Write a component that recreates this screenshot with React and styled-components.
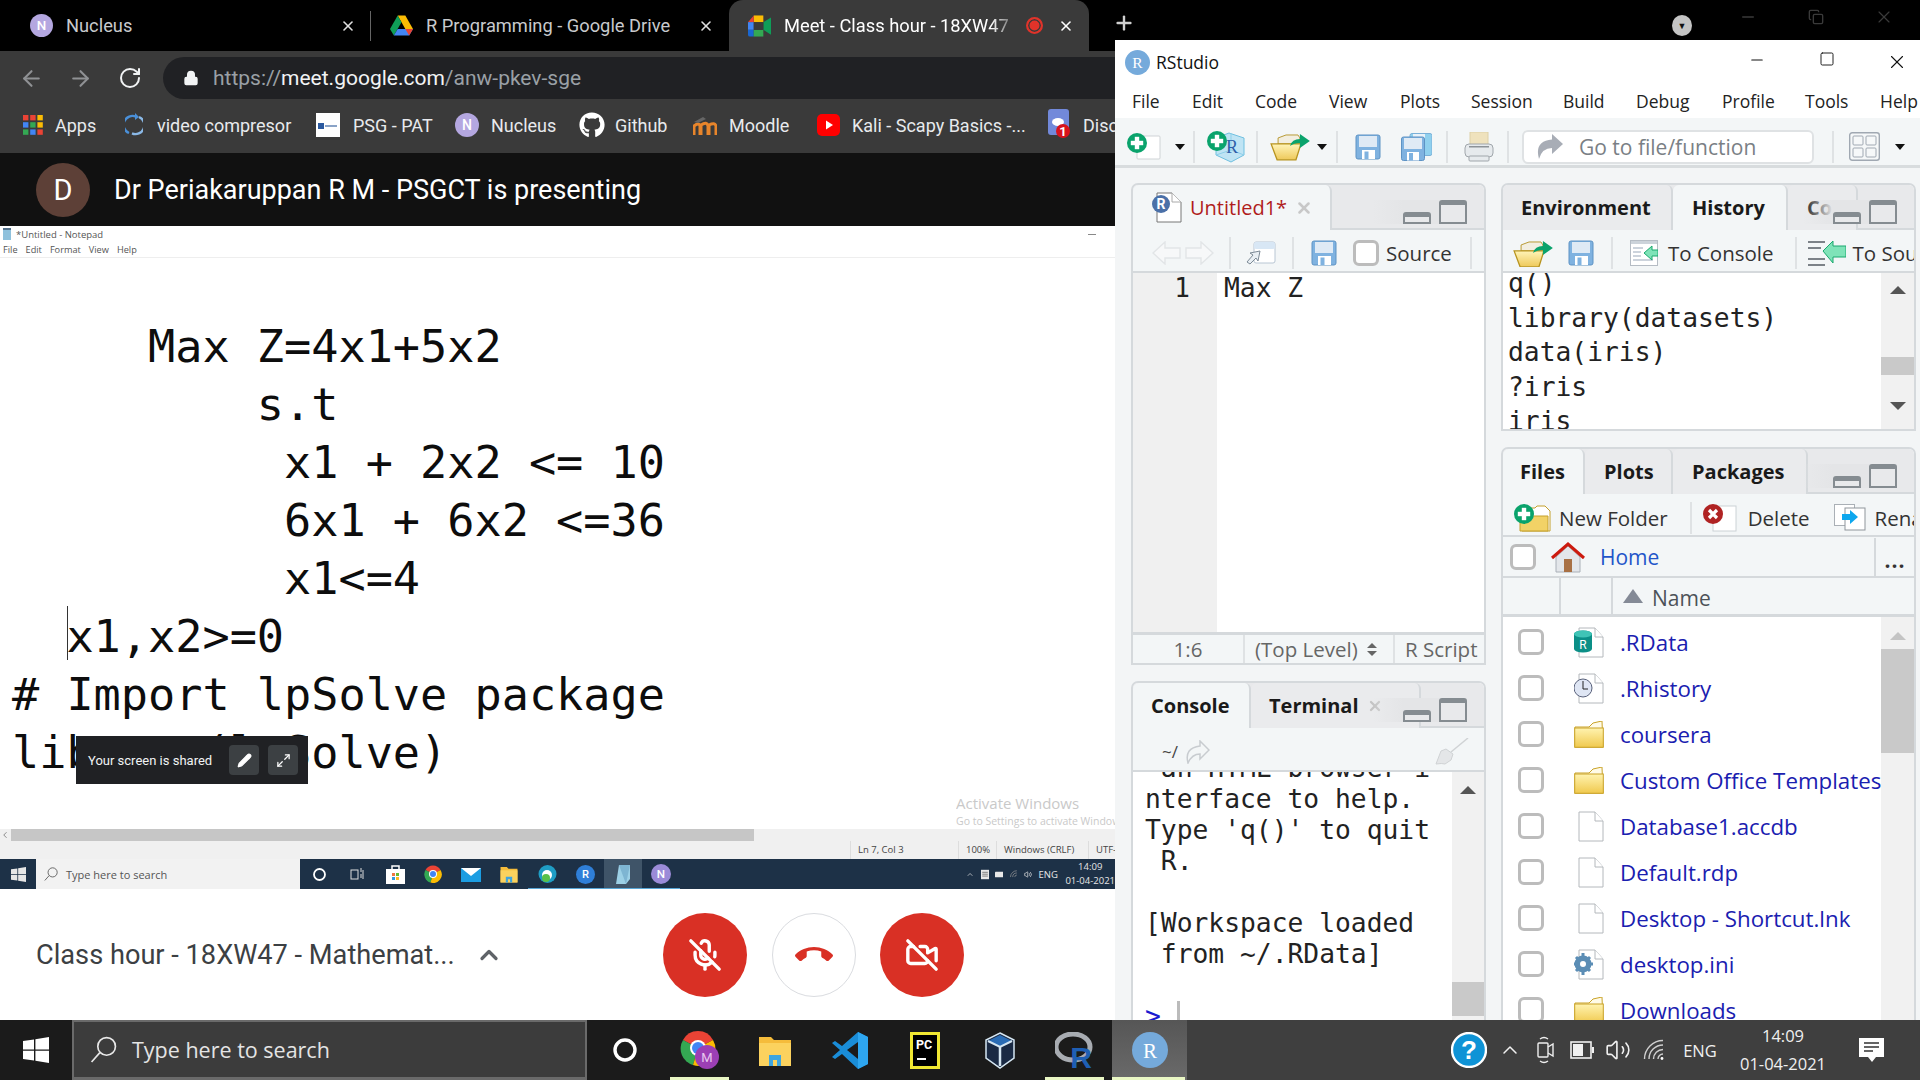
import React from 'react';
import styled, { createGlobalStyle } from 'styled-components';
import { ArrowLeft, ArrowRight, RotateCw, Lock, X, Plus, Minus, Square, Copy, ChevronUp, ChevronLeft, Pencil, Maximize2, MicOff, VideoOff, Volume2 } from 'lucide-react';
import { FaGithub } from 'react-icons/fa';

const GlobalStyle = createGlobalStyle`
  html, body { margin: 0; padding: 0; background: #000; overflow: hidden; }
  * { box-sizing: border-box; }
`;

const UI = '"Open Sans", "Noto Sans", sans-serif';
const MONO = '"DejaVu Sans Mono", "Liberation Mono", monospace';

const Screen = styled.div`
  width: 1920px;
  height: 1080px;
  display: flex;
  flex-direction: column;
  overflow: hidden;
  font-family: ${UI};
`;

const MainRow = styled.div`
  flex: none;
  height: 1020px;
  display: flex;
`;

const Spacer = styled.span`
  flex: ${p => (p.$grow ? 1 : 'none')};
  width: ${p => p.$w ?? 0}px;
`;

/* ---------- chrome ---------- */

const ChromeColumn = styled.div`
  width: 1115px;
  flex: none;
  display: flex;
  flex-direction: column;
  background: #fff;
`;

const TabStrip = styled.div`
  height: 51px;
  flex: none;
  display: flex;
  background: #000;
`;

const Tab = styled.div`
  flex: none;
  width: ${p => p.$w}px;
  padding-left: ${p => p.$pad}px;
  padding-right: 15px;
  display: flex;
  align-items: center;
  gap: 13px;
  color: ${p => (p.$active ? '#fff' : '#c8cacd')};
  background: ${p => (p.$active ? '#3a3a3a' : 'transparent')};
  border-radius: ${p => (p.$active ? '14px 14px 0 0' : '0')};
  font-family: Roboto, sans-serif;
  font-size: 18.3px;
  position: relative;
  ${p => p.$sep && `&::after { content: ''; position: absolute; right: 0; top: 11px; bottom: 10px; width: 1px; background: #666; }`}
`;

const TabTitle = styled.span`
  flex: 1;
  white-space: nowrap;
  overflow: hidden;
  min-width: 0;
  ${p => p.$fade && `-webkit-mask-image: linear-gradient(90deg, #000 88%, transparent 100%); mask-image: linear-gradient(90deg, #000 88%, transparent 100%);`}
`;

const RecDot = styled.span`
  width: 17px;
  height: 17px;
  flex: none;
  border-radius: 50%;
  background: #e0332a;
  border: 2px solid #e0332a;
  box-shadow: inset 0 0 0 1.5px #3a3a3a;
  margin-left: -6px;
  margin-right: 2px;
`;

const NavBar = styled.div`
  height: 52px;
  flex: none;
  display: flex;
  align-items: center;
  padding-top: 2px;
  background: #3a3a3a;
  color: #8f9194;
`;

const NavButton = styled.div`
  width: 49px;
  display: flex;
  justify-content: center;
  color: ${p => (p.$on ? '#f1f3f4' : '#8f9194')};
`;

const NavIcons = styled.div`
  display: flex;
  padding-left: 7px;
  width: 163px;
`;

const Address = styled.div`
  flex: 1;
  height: 42px;
  border-radius: 21px 0 0 21px;
  background: #202124;
  display: flex;
  align-items: center;
  padding-left: 20px;
  gap: 14px;
  font-family: Roboto, sans-serif;
  font-size: 21px;
  color: #9aa0a6;
`;

const AddressStrong = styled.span`
  color: #f1f3f4;
`;

const Bookmarks = styled.div`
  height: 50px;
  flex: none;
  background: #3a3a3a;
  padding: 0 0 6px 23px;
  display: flex;
  align-items: center;
  overflow: hidden;
  color: #e8eaed;
  font-family: Roboto, sans-serif;
  font-size: 18px;
  white-space: nowrap;
`;

const Bookmark = styled.div`
  flex: none;
  width: ${p => p.$w}px;
  display: flex;
  align-items: center;
  gap: ${p => p.$gap ?? 12}px;
`;

const Presenter = styled.div`
  height: 73px;
  flex: none;
  background: #111;
  display: flex;
  align-items: center;
  padding-left: 36px;
  gap: 24px;
  color: #fff;
  font-family: Roboto, sans-serif;
  font-size: 27px;
`;

const Avatar = styled.div`
  width: 54px;
  height: 54px;
  border-radius: 50%;
  background: #5d4037;
  display: flex;
  align-items: center;
  justify-content: center;
  font-size: 29px;
`;

/* ---------- shared notepad ---------- */

const Notepad = styled.div`
  flex: 1;
  display: flex;
  flex-direction: column;
  min-height: 0;
  background: #fff;
`;

const NotepadTitle = styled.div`
  height: 16px;
  flex: none;
  display: flex;
  align-items: center;
  padding: 0 8px 0 2px;
  gap: 4px;
  font-size: 9.5px;
  color: #555;
`;

const NotepadMinimize = styled.span`
  margin-left: auto;
  margin-right: 11px;
  width: 8px;
  height: 1px;
  background: #888;
`;

const NotepadMenu = styled.div`
  height: 16px;
  flex: none;
  display: flex;
  align-items: center;
  padding-left: 3px;
  gap: 8px;
  font-size: 9.2px;
  color: #555;
  border-bottom: 1px solid #eee;
`;

const NotepadText = styled.div`
  flex: 1;
  min-height: 0;
  position: relative;
  padding: 60px 0 0 12px;
  overflow: hidden;
  font-family: ${MONO};
  font-size: 45.2px;
  line-height: 58px;
  color: #0d0d0d;
  white-space: pre;
`;

const Caret = styled.span`
  position: absolute;
  left: 67px;
  top: 348px;
  width: 1px;
  height: 54px;
  background: #333;
`;

const ShareToast = styled.div`
  position: absolute;
  left: 76px;
  top: 478px;
  width: 232px;
  height: 48px;
  background: #202124;
  display: flex;
  align-items: center;
  padding: 0 10px 0 12px;
  gap: 9px;
  font-family: Roboto, sans-serif;
  font-size: 13px;
  line-height: 1;
  color: #f1f3f4;
`;

const ToastLabel = styled.span`
  flex: 1;
  white-space: nowrap;
`;

const ToastButton = styled.span`
  width: 30px;
  height: 30px;
  border-radius: 4px;
  background: #3c4043;
  display: flex;
  align-items: center;
  justify-content: center;
`;

const Watermark = styled.div`
  position: absolute;
  left: 956px;
  top: 534px;
  width: 159px;
  overflow: hidden;
  color: #c9c9c9;
  font-family: ${UI};
  font-size: 15px;
  line-height: 22px;
`;

const WatermarkSub = styled.div`
  font-size: 10.5px;
  line-height: 14px;
`;

const HScroll = styled.div`
  height: 12px;
  flex: none;
  background: #f0f0f0;
  display: flex;
  align-items: center;
  color: #777;
`;

const HScrollThumb = styled.div`
  width: 743px;
  height: 12px;
  background: #c6c6c6;
  margin-left: 1px;
`;

const NotepadStatus = styled.div`
  height: 18px;
  flex: none;
  background: #f0f0f0;
  display: flex;
  font-size: 9.5px;
  color: #444;
  padding-left: 850px;
`;

const StatusCell = styled.div`
  width: ${p => p.$w}px;
  border-left: 1px solid #ddd;
  padding-left: 7px;
  line-height: 18px;
  white-space: nowrap;
  overflow: hidden;
`;

const InnerTaskbar = styled.div`
  height: 30px;
  flex: none;
  background: #1d3147;
  display: flex;
  align-items: center;
  overflow: hidden;
  color: #e6e6e6;
`;

const InnerStart = styled.div`
  width: 36px;
  display: flex;
  justify-content: center;
`;

const InnerSearch = styled.div`
  width: 264px;
  height: 30px;
  background: #f2f2f2;
  color: #555;
  display: flex;
  align-items: center;
  padding-left: 8px;
  gap: 8px;
  font-size: 11px;
`;

const InnerSlot = styled.div`
  width: 38px;
  height: 30px;
  flex: none;
  display: flex;
  align-items: center;
  justify-content: center;
  background: ${p => (p.$active ? '#3f5468' : 'transparent')};
  box-shadow: ${p => (p.$open ? 'inset 0 -1px 0 #58a6d6' : 'none')};
`;

const InnerTray = styled.div`
  margin-left: auto;
  display: flex;
  align-items: center;
  gap: 6.5px;
  width: 155px;
  flex: none;
  font-size: 9.5px;
  padding-left: 6px;
`;

const InnerClock = styled.div`
  flex: none;
  font-size: 9.5px;
  line-height: 14px;
  text-align: center;
  white-space: nowrap;
  margin-left: 1px;
`;

/* ---------- meet bar ---------- */

const MeetBar = styled.div`
  height: 131px;
  flex: none;
  background: #fff;
  display: flex;
  align-items: center;
  padding-left: 36px;
`;

const MeetTitle = styled.div`
  width: 627px;
  display: flex;
  align-items: center;
  gap: 20px;
  font-family: Roboto, sans-serif;
  font-size: 27.2px;
  color: #3c4043;
  white-space: nowrap;
`;

const MeetButtons = styled.div`
  display: flex;
  gap: 24.5px;
`;

const RoundButton = styled.div`
  width: 84px;
  height: 84px;
  border-radius: 50%;
  background: ${p => (p.$light ? '#fff' : '#d93025')};
  border: ${p => (p.$light ? '1px solid #dadce0' : 'none')};
  display: flex;
  align-items: center;
  justify-content: center;
  color: #fff;
`;

/* ---------- rstudio ---------- */

const RightColumn = styled.div`
  flex: none;
  width: 805px;
  display: flex;
  flex-direction: column;
`;

const WindowStrip = styled.div`
  height: 40px;
  flex: none;
  background: #000;
  display: flex;
  align-items: center;
  padding: 0 2px 0 0;
  color: #d0d0d0;
`;

const StripPlus = styled.div`
  width: 20px;
  margin-top: 10px;
  margin-left: -2px;
`;

const StripMenu = styled.div`
  margin-left: auto;
  width: 20px;
  height: 21px;
  border-radius: 50%;
  background: #c4c4c4;
  display: flex;
  align-items: center;
  justify-content: center;
  margin-top: 10px;
  margin-right: 22px;
  color: #111;
  font-size: 9px;
`;

const StripControl = styled.div`
  width: 68px;
  display: flex;
  justify-content: center;
  color: #3a3a3a;
  margin-top: -6px;
`;

const RStudioWindow = styled.div`
  flex: 1;
  min-height: 0;
  display: flex;
  flex-direction: column;
  background: #fff;
  overflow: hidden;
`;

const TitleBar = styled.div`
  height: 44px;
  flex: none;
  display: flex;
  align-items: center;
  padding-left: 10px;
  gap: 6px;
  font-size: 17.5px;
  color: #111;
`;

const WindowButtons = styled.div`
  margin-left: auto;
  margin-right: -12px;
  display: flex;
  color: #111;
`;

const WindowButton = styled.div`
  width: 70px;
  display: flex;
  justify-content: center;
`;

const MenuBar = styled.div`
  height: 34px;
  flex: none;
  display: flex;
  align-items: center;
  font-size: 17.5px;
  color: #222;
  padding-left: 17px;
  white-space: nowrap;
`;

const MenuItem = styled.span`
  flex: none;
  width: ${p => p.$w}px;
`;

const Toolbar = styled.div`
  height: 50px;
  flex: none;
  background: #f3f6f7;
  border-bottom: 3px solid #d8dcde;
  display: flex;
  align-items: center;
  padding: 10px 0 0 12px;
  & svg { flex: none; }
`;

const ToolSep = styled.span`
  flex: none;
  width: 2px;
  height: ${p => p.$h ?? 32}px;
  background: #dfe2e4;
  margin-left: ${p => p.$ml ?? 13}px;
  margin-right: ${p => p.$mr ?? 13}px;
`;

const DropArrow = styled.span`
  flex: none;
  width: 0;
  height: 0;
  border-left: 5px solid transparent;
  border-right: 5px solid transparent;
  border-top: 6px solid #111;
  margin-left: ${p => p.$ml ?? 8}px;
`;

const GotoBox = styled.div`
  flex: none;
  width: 292px;
  height: 34px;
  background: #fff;
  border: 2px solid #dfe2e4;
  border-radius: 6px;
  display: flex;
  align-items: center;
  padding-left: 13px;
  gap: 16px;
  font-size: 21px;
  color: #7a7f85;
`;

const Workspace = styled.div`
  flex: 1;
  min-height: 0;
  background: #f3f5f6;
  display: flex;
  gap: 15px;
  padding: 15px 4px 0 16px;
`;

const PaneColumn = styled.div`
  flex: none;
  width: ${p => p.$w}px;
  display: flex;
  flex-direction: column;
  gap: 16px;
`;

const Pane = styled.div`
  flex: none;
  height: ${p => p.$h}px;
  display: flex;
  flex-direction: column;
  border: 2px solid #d5d9dc;
  border-radius: 7px 7px 0 0;
  background: #fff;
  overflow: hidden;
`;

const TabBar = styled.div`
  height: 45px;
  flex: none;
  display: flex;
  background: #e8e9eb;
  border-bottom: 2px solid #d5d9dc;
  position: relative;
`;

const PaneTab = styled.div`
  flex: none;
  width: ${p => p.$w}px;
  height: 45px;
  padding-left: ${p => p.$pad ?? 0}px;
  background: ${p => (p.$active ? '#f3f6f7' : '#eaebed')};
  border-right: 2px solid #d5d9dc;
  border-radius: 6px 6px 0 0;
  display: flex;
  align-items: center;
  gap: 8px;
  font-size: 20px;
  font-weight: ${p => (p.$red ? 400 : 700)};
  color: ${p => (p.$red ? '#b01c1c' : '#1a1a1a')};
  white-space: nowrap;
  overflow: hidden;
  & svg { flex: none; }
`;

const PaneControls = styled.div`
  position: absolute;
  right: 17px;
  bottom: 4px;
  display: flex;
  align-items: flex-end;
  gap: 8px;
  padding-left: 30px;
  background: linear-gradient(90deg, transparent, #e4e5e7 30px);
`;

const MinShape = styled.span`
  width: 28px;
  height: 12px;
  border: 2px solid #858c91;
  border-top-width: 5px;
  border-radius: 3px 3px 0 0;
  background: #e8e9eb;
`;

const MaxShape = styled.span`
  width: 28px;
  height: 24px;
  border: 2px solid #858c91;
  border-top-width: 5px;
  border-radius: 3px 3px 0 0;
  background: #e8e9eb;
`;

const PaneBar = styled.div`
  height: 43px;
  flex: none;
  background: #f3f6f7;
  border-bottom: 2px solid #d5d9dc;
  display: flex;
  align-items: center;
  padding-top: ${p => p.$top ?? 4}px;
  padding-left: ${p => p.$pad ?? 12}px;
  font-size: 20.5px;
  color: #333;
  white-space: nowrap;
  overflow: hidden;
  & svg { flex: none; }
`;

const BarLabel = styled.span`
  flex: none;
  margin-left: ${p => p.$ml ?? 8}px;
`;

const Checkbox = styled.span`
  flex: none;
  display: block;
  width: 26px;
  height: 26px;
  border: 3px solid #bcbcbc;
  border-radius: 6px;
  background: #fff;
`;

const EditorBody = styled.div`
  flex: 1;
  display: flex;
  min-height: 0;
`;

const Gutter = styled.div`
  width: 84px;
  flex: none;
  background: #f0f0f0;
  padding-right: 27px;
  text-align: right;
  font-family: ${MONO};
  font-size: 26px;
  line-height: 30px;
  color: #222;
`;

const Code = styled.div`
  flex: 1;
  padding-left: 7px;
  font-family: ${MONO};
  font-size: 26.3px;
  line-height: 30px;
  color: #222;
  white-space: pre;
`;

const SourceStatus = styled.div`
  height: 31px;
  flex: none;
  display: flex;
  background: #f3f6f7;
  border-top: 3px solid #d5d9dc;
  font-size: 20.5px;
  color: #666;
  line-height: 28px;
`;

const StatusPart = styled.div`
  flex: none;
  width: ${p => p.$w}px;
  padding-left: ${p => p.$pad ?? 0}px;
  border-right: ${p => (p.$last ? 'none' : '2px solid #dfe2e4')};
  display: flex;
  align-items: center;
  justify-content: ${p => (p.$center ? 'center' : 'flex-start')};
  gap: 9px;
  white-space: nowrap;
  overflow: hidden;
`;

const UpDown = styled.span`
  display: flex;
  flex-direction: column;
  gap: 3px;
`;

const ScrollBody = styled.div`
  flex: 1;
  min-height: 0;
  display: flex;
  overflow: hidden;
  background: #fff;
`;

const MonoLines = styled.div`
  flex: 1;
  min-width: 0;
  margin-top: ${p => p.$mt ?? 0}px;
  padding-left: ${p => p.$pad ?? 5}px;
  font-family: ${MONO};
  font-size: 26.3px;
  line-height: ${p => p.$lh}px;
  color: #222;
  white-space: pre;
`;

const Prompt = styled.span`
  color: #1a1ad0;
`;

const PromptCursor = styled.span`
  display: inline-block;
  width: 3px;
  height: 30px;
  margin-left: 16px;
  vertical-align: top;
  background: #bbb;
`;

const VScroll = styled.div`
  flex: none;
  width: ${p => p.$w}px;
  background: #f1f1f1;
  display: flex;
  flex-direction: column;
  align-items: center;
`;

const ScrollArrow = styled.span`
  flex: none;
  width: 0;
  height: 0;
  border-left: ${p => p.$s ?? 8}px solid transparent;
  border-right: ${p => p.$s ?? 8}px solid transparent;
  ${p => (p.$down ? `border-top: ${p.$s ?? 8}px solid ${p.$c ?? '#555'};` : `border-bottom: ${p.$s ?? 8}px solid ${p.$c ?? '#555'};`)}
  margin-top: ${p => p.$mt ?? 0}px;
`;

const ScrollThumb = styled.span`
  flex: none;
  width: 100%;
  height: ${p => p.$h}px;
  background: #c9c9c9;
  margin-top: ${p => p.$mt}px;
`;

const PathLabel = styled.span`
  font-size: 17px;
  color: #444;
  margin: 0 8px 0 29px;
`;

const PathRow = styled.div`
  height: ${p => p.$h ?? 41}px;
  flex: none;
  display: flex;
  align-items: center;
  border-bottom: 2px solid #d5d9dc;
  background: #f3f6f7;
  font-size: 21px;
  padding-top: ${p => p.$top ?? 0}px;
`;

const HomeLink = styled.span`
  color: #1f55c9;
  margin-left: 15px;
  flex: 1;
`;

const MoreCell = styled.span`
  flex: none;
  width: 40px;
  height: 39px;
  border-left: 2px solid #d5d9dc;
  text-align: center;
  line-height: 44px;
  font-weight: 700;
  color: #333;
  letter-spacing: 1px;
`;

const HeaderRow = styled.div`
  height: 39px;
  flex: none;
  display: flex;
  align-items: stretch;
  background: #f3f6f7;
  border-bottom: 3px solid #d5d9dc;
  font-size: 21px;
  color: #4c5258;
`;

const HeaderCell = styled.div`
  flex: ${p => (p.$grow ? 1 : 'none')};
  width: ${p => p.$w}px;
  border-right: ${p => (p.$grow ? 'none' : '2px solid #d5d9dc')};
  display: flex;
  align-items: center;
  padding-left: ${p => p.$pad ?? 0}px;
  padding-top: 4px;
  gap: 9px;
`;

const SortUp = styled.span`
  width: 0;
  height: 0;
  border-left: 10px solid transparent;
  border-right: 10px solid transparent;
  border-bottom: 14px solid #848a96;
  margin-top: -4px;
`;

const FileList = styled.div`
  flex: 1;
  min-width: 0;
  padding-top: 2px;
  overflow: hidden;
`;

const FileRow = styled.div`
  height: 46px;
  display: flex;
  align-items: center;
  padding-left: 15px;
`;

const FileIconCell = styled.span`
  flex: none;
  width: 30px;
  margin-left: 30px;
  margin-right: 16px;
  display: flex;
`;

const FileName = styled.span`
  font-size: 22.3px;
  color: #1a20b0;
  white-space: nowrap;
`;

/* ---------- os taskbar ---------- */

const Taskbar = styled.div`
  height: 60px;
  flex: none;
  display: flex;
  align-items: center;
  background: linear-gradient(90deg, #1b1b1b 1115px, #3f3f3f 1115px);
  color: #fff;
`;

const StartTile = styled.div`
  width: 72px;
  display: flex;
  justify-content: center;
`;

const SearchBox = styled.div`
  width: 515px;
  height: 60px;
  background: #3c3c3c;
  border: 2px solid #6a6a6a;
  border-bottom-width: 3px;
  display: flex;
  align-items: center;
  padding-left: 16px;
  gap: 15px;
  font-size: 21.5px;
  color: #e4e4e4;
`;

const TaskSlot = styled.div`
  width: 75px;
  height: 60px;
  flex: none;
  position: relative;
  display: flex;
  align-items: center;
  justify-content: center;
  background: ${p => (p.$active ? 'linear-gradient(180deg,#565656,#6a6a6a)' : 'transparent')};
  ${p => p.$open && `&::after { content: ''; position: absolute; left: 8px; right: 8px; bottom: 0; height: 3px; background: #e9f7c4; }`}
  ${p => p.$active && `&::after { left: 0; right: 2px; }`}
`;

const Tray = styled.div`
  display: flex;
  align-items: center;
  padding-left: 264px;
  color: #f0f0f0;
`;

const TrayIcon = styled.div`
  width: 36px;
  margin-right: ${p => p.$mr ?? 0}px;
  display: flex;
  justify-content: center;
`;

const TrayText = styled.div`
  width: 52px;
  margin-left: 2px;
  text-align: center;
  font-size: 16.5px;
`;

const Clock = styled.div`
  width: 110px;
  margin-left: 2px;
  text-align: center;
  font-size: 16.5px;
  line-height: 28px;
  white-space: nowrap;
`;

const Notify = styled.div`
  width: 40px;
  margin-left: 13px;
  display: flex;
  justify-content: center;
`;

/* ---------- icons ---------- */

const Letter = ({ size, bg, color = '#fff', text, font = 'Roboto, sans-serif', fs }) => (
  <svg width={size} height={size} viewBox="0 0 24 24">
    <circle cx="12" cy="12" r="12" fill={bg} />
    <text x="12" y="17" textAnchor="middle" fontFamily={font} fontSize={fs ?? 14} fontWeight="500" fill={color}>{text}</text>
  </svg>
);

const DriveIcon = () => (
  <svg width="23" height="22" viewBox="0 0 24 22">
    <polygon points="8,0 16,0 24,14 16,14" fill="#fbbc04" />
    <polygon points="8,0 0,14 4,21 12,7" fill="#0f9d58" />
    <polygon points="4,21 20,21 24,14 8,14" fill="#4285f4" />
    <polygon points="16,14 20,21 24,14" fill="#ea4335" />
  </svg>
);

const MeetIcon = () => (
  <svg width="23" height="22" viewBox="0 0 24 22">
    <polygon points="6,0 16,0 16,7 6,7" fill="#fbbc04" />
    <polygon points="6,0 6,7 0,7" fill="#ea4335" />
    <rect x="0" y="7" width="6" height="8" fill="#4285f4" />
    <path d="M0 15h6v7H2a2 2 0 0 1-2-2z" fill="#1967d2" />
    <rect x="6" y="15" width="10" height="7" fill="#34a853" />
    <polygon points="16,7 16,15 24,20 24,2" fill="#0f9d58" />
    <rect x="6" y="7" width="10" height="8" fill="#3a3a3a" />
  </svg>
);

const AppsIcon = () => {
  const colors = ['#ea4335', '#ea4335', '#fbbc04', '#4285f4', '#34a853', '#fbbc04', '#34a853', '#4285f4', '#ea4335'];
  return (
    <svg width="20" height="20" viewBox="0 0 20 20">
      {colors.map((c, i) => (
        <rect key={i} x={(i % 3) * 7.2} y={Math.floor(i / 3) * 7.2} width="5.4" height="5.4" fill={c} />
      ))}
    </svg>
  );
};

const SyncIcon = () => (
  <svg width="18" height="24" viewBox="0 0 18 24" fill="none" stroke="#4a90d9" strokeWidth="2.4">
    <path d="M4 20A8.5 8.5 0 0 1 11 3.6" />
    <path d="M14 4A8.5 8.5 0 0 1 7 20.4" stroke="#8ab8e6" />
    <polygon points="10,0 14,4 10,7" fill="#4a90d9" stroke="none" />
  </svg>
);

const PatIcon = () => (
  <svg width="24" height="24" viewBox="0 0 24 24">
    <rect width="24" height="24" fill="#fff" />
    <rect x="2" y="10" width="6" height="6" fill="#2c5aa0" />
    <rect x="9" y="12" width="12" height="2" fill="#8aa3c7" />
  </svg>
);

const MoodleIcon = () => (
  <svg width="24" height="22" viewBox="0 0 24 22">
    <path d="M1 21V12q5-4 6 0v9M8 21V11q6-4 7 1v9M16 21V11q6-3 7 1v9" fill="none" stroke="#e8852b" strokeWidth="3" />
    <path d="M1 8l9-5 3 2-8 4z" fill="#666" />
  </svg>
);

const YoutubeIcon = () => (
  <svg width="23" height="22" viewBox="0 0 23 22">
    <rect width="23" height="22" rx="5" fill="#f00" />
    <polygon points="9,6.5 16,11 9,15.5" fill="#fff" />
  </svg>
);

const DiscordIcon = () => (
  <svg width="22" height="32" viewBox="0 0 22 32">
    <rect y="0" width="21" height="26" rx="3" fill="#7289da" />
    <ellipse cx="10" cy="13" rx="6" ry="4" fill="#fff" />
    <circle cx="15" cy="22" r="7" fill="#d8121c" />
    <text x="15" y="27" textAnchor="middle" fontFamily="Roboto, sans-serif" fontSize="13" fontWeight="700" fill="#fff">1</text>
  </svg>
);

const NotepadGlyph = ({ size = 10 }) => (
  <svg width={size} height={size + 2} viewBox="0 0 10 12">
    <path d="M1 2h8v10H1z" fill="#8fc1dc" />
    <rect x="1" y="0" width="8" height="2" fill="#52708a" />
  </svg>
);

const Magnifier = ({ size, color = 'currentColor', sw = 1.6 }) => (
  <svg width={size} height={size} viewBox="0 0 26 26" fill="none" stroke={color} strokeWidth={sw}>
    <circle cx="16" cy="10" r="8.5" />
    <path d="M9.5 16L1.5 25" />
  </svg>
);

const GreenPlus = ({ x = 0, y = 0, r = 10 }) => (
  <g transform={`translate(${x} ${y})`}>
    <circle cx={r} cy={r} r={r} fill="#0aa36c" />
    <rect x={r - r * 0.62} y={r - r * 0.22} width={r * 1.24} height={r * 0.44} fill="#fff" />
    <rect x={r - r * 0.22} y={r - r * 0.62} width={r * 0.44} height={r * 1.24} fill="#fff" />
  </g>
);

const NewFileIcon = () => (
  <svg width="34" height="27" viewBox="0 0 34 27">
    <rect x="10" y="3" width="23" height="23" rx="1" fill="#fff" stroke="#cfd3d6" />
    <GreenPlus r="10" />
  </svg>
);

const ProjectIcon = () => (
  <svg width="38" height="32" viewBox="0 0 38 32">
    <path d="M9 7l13-5 15 5v17l-13 7-15-7z" fill="#bfe4f4" stroke="#6fc0e0" />
    <path d="M9 24l15-5 13 5M24 19V2" fill="none" stroke="#8fd0ea" />
    <text x="25" y="22" textAnchor="middle" fontFamily="Liberation Serif, serif" fontSize="18" fill="#2f5fa8">R</text>
    <GreenPlus r="10" />
  </svg>
);

const OpenFolder = ({ w = 40 }) => (
  <svg width={w} height={w * 0.72} viewBox="0 0 40 29">
    <defs>
      <linearGradient id="folderFill" x1="0" y1="0" x2="0" y2="1">
        <stop offset="0" stopColor="#fff4b8" />
        <stop offset="1" stopColor="#eec95a" />
      </linearGradient>
    </defs>
    <path d="M8 6l8-3h12l2 3v6H8z" fill="#f2eee0" stroke="#b89a35" />
    <path d="M1 12h26l4 0-5 16H7z" fill="url(#folderFill)" stroke="#b8941f" strokeWidth="1.3" />
    <path d="M20 14q2-7 10-7V2l10 7-10 7v-5q-6 0-10 3z" fill="#0aa36c" />
  </svg>
);

const Floppy = ({ size = 26 }) => (
  <svg width={size} height={size} viewBox="0 0 26 26">
    <rect x="1" y="1" width="24" height="24" rx="2" fill="#7fb2e0" stroke="#5e93c4" />
    <rect x="4" y="2" width="18" height="11" fill="#dfeaf5" />
    <rect x="7" y="16" width="13" height="9" fill="#fff" />
    <rect x="9.5" y="17.5" width="4" height="7.5" fill="#7fb2e0" />
  </svg>
);

const FloppyAll = () => (
  <svg width="31" height="28" viewBox="0 0 31 28">
    <rect x="9" y="0.5" width="22" height="22" rx="2" fill="#8fd0ee" stroke="#7ab0d8" />
    <rect x="12" y="1" width="12" height="16" fill="#e9f2f9" />
    <rect x="0.5" y="4" width="23" height="23.5" rx="2" fill="#7fb2e0" stroke="#5e93c4" />
    <rect x="3" y="5" width="18" height="11" fill="#dfeaf5" />
    <rect x="6" y="19" width="12" height="8.5" fill="#fff" />
    <rect x="8" y="20" width="4" height="7.5" fill="#7fb2e0" />
  </svg>
);

const PrinterIcon = () => (
  <svg width="30" height="30" viewBox="0 0 30 30">
    <rect x="6" y="0" width="18" height="15" fill="#efe2bd" stroke="#ddd0a8" />
    <rect x="1" y="12" width="28" height="13" rx="4" fill="#e6eaed" stroke="#a0a6ab" />
    <rect x="5" y="14" width="20" height="1.5" fill="#8c9297" />
    <rect x="5" y="24" width="20" height="5" rx="1" fill="#e6eaed" stroke="#a0a6ab" />
  </svg>
);

const GoToArrow = () => (
  <svg width="26" height="25" viewBox="0 0 26 25">
    <path d="M15 0l11 10-11 10v-6Q5 14 2 25-3 7 15 5.5z" fill="#a8adb6" />
  </svg>
);

const GridIcon = () => (
  <svg width="31" height="29" viewBox="0 0 31 29" fill="none" stroke="#a0a8b2">
    <rect x="0.7" y="0.7" width="29.6" height="27.6" rx="2.5" fill="#f6f8f9" strokeWidth="1.4" />
    <rect x="4" y="4" width="10" height="9" rx="1" />
    <rect x="17" y="4" width="10" height="9" rx="1" />
    <rect x="4" y="16" width="10" height="9" rx="1" />
    <rect x="17" y="16" width="10" height="9" rx="1" />
  </svg>
);

const RDocIcon = () => (
  <svg width="30" height="31" viewBox="0 0 30 31">
    <path d="M5 1h15l9 9v20H5z" fill="#fff" stroke="#777" strokeWidth="1" />
    <path d="M20 1v9h9" fill="#fff" stroke="#aaa" strokeWidth="1" />
    <circle cx="9" cy="12" r="9" fill="#4a70a8" />
    <text x="9" y="17" textAnchor="middle" fontFamily="Roboto, sans-serif" fontWeight="700" fontSize="14" fill="#fff">R</text>
  </svg>
);

const GhostArrows = () => (
  <svg width="62" height="24" viewBox="0 0 62 24" fill="#f7f8f9" stroke="#e2e5e7" strokeWidth="1.4">
    <path d="M1 12L13 1v6h15v10H13v6z" />
    <path d="M61 12L49 1v6H34v10h15v6z" />
  </svg>
);

const PopoutIcon = () => (
  <svg width="30" height="24" viewBox="0 0 30 24">
    <rect x="8" y="1" width="21" height="21" rx="2" fill="#fff" stroke="#b9c6d4" />
    <rect x="8" y="1" width="21" height="7" rx="2" fill="#d8e7f5" />
    <path d="M1 21l6-7-3-2 10-2-2 10-2-3-6 6z" fill="#e8eef3" stroke="#7d8a96" />
  </svg>
);

const ToConsoleIcon = () => (
  <svg width="28" height="26" viewBox="0 0 28 26">
    <rect x="0.5" y="0.5" width="27" height="25" fill="#fff" stroke="#b5bcc4" />
    <rect x="1" y="1" width="26" height="3" fill="#ccd3da" />
    <path d="M3 8h10M3 12h8M3 16h8M3 20h20" stroke="#ccd3dc" strokeWidth="2" />
    <path d="M14 13l8-7v4h6v6h-6v4z" fill="#7fe3b8" stroke="#1aa86e" />
  </svg>
);

const ToSourceIcon = () => (
  <svg width="38" height="26" viewBox="0 0 38 26">
    <path d="M0 2h17M0 8h13M0 19h17M0 25h17" stroke="#7c8288" strokeWidth="2.2" />
    <path d="M15 11L25 1v5h13v11H25v6z" fill="#7fe3b8" stroke="#1aa86e" />
  </svg>
);

const BackCurve = () => (
  <svg width="24" height="24" viewBox="0 0 24 24" fill="#f3f6f7" stroke="#c8ccd0" strokeWidth="1.5">
    <path d="M14 1l9 9-9 9v-5Q6 14 2 23-2 8 14 6z" />
  </svg>
);

const BroomIcon = () => (
  <svg width="34" height="28" viewBox="0 0 34 28" fill="none">
    <path d="M16 14L33 0" stroke="#d0d3d5" strokeWidth="1.5" />
    <path d="M1 26l5-13 5-2 7 5-2 6-6 4q-3-1-9 0z" fill="#e4e6e8" stroke="#cfd2d4" />
  </svg>
);

const NewFolderIcon = () => (
  <svg width="37" height="28" viewBox="0 0 37 28">
    <path d="M8 27V4h13l2-2h8l5 5v20z" fill="#fff" stroke="#c4a02c" />
    <path d="M6 27V12h28v15z" fill="#f2d266" stroke="#c4a02c" />
    <GreenPlus r="10" />
  </svg>
);

const DeleteIcon = () => (
  <svg width="34" height="28" viewBox="0 0 34 28">
    <rect x="10" y="2" width="23" height="25" fill="#fff" stroke="#ccd2d6" />
    <circle cx="10" cy="10" r="10" fill="#b02323" />
    <path d="M6 6l8 8M14 6l-8 8" stroke="#fff" strokeWidth="3.2" />
  </svg>
);

const RenameIcon = () => (
  <svg width="32" height="27" viewBox="0 0 32 27">
    <rect x="0.5" y="0.5" width="20" height="21" fill="#fff" stroke="#aab0b6" />
    <rect x="11" y="4" width="20" height="22" fill="#fff" stroke="#8f959b" />
    <path d="M8 10h8V6l8 7-8 7v-4H8z" fill="#0ea7ee" />
  </svg>
);

const HomeIcon = () => (
  <svg width="34" height="31" viewBox="0 0 34 31">
    <path d="M5 15L17 4l12 11v15H5z" fill="#e3e6ea" stroke="#aab0b8" />
    <path d="M1 16L17 2l16 14" fill="none" stroke="#cc1a0e" strokeWidth="3" />
    <rect x="13" y="17" width="8" height="13" fill="#a87044" />
  </svg>
);

const FileGlyph = ({ kind }) => {
  if (kind === 'folder') {
    return (
      <svg width="30" height="27" viewBox="0 0 30 27">
        <defs>
          <linearGradient id="rowFolder" x1="0" y1="0" x2="0" y2="1">
            <stop offset="0" stopColor="#fff3b0" />
            <stop offset="1" stopColor="#f0c94e" />
          </linearGradient>
        </defs>
        <path d="M1 26V6h14l4-4 9-2 1 26z" fill="#fffbe8" stroke="#c9a227" />
        <rect x="0.7" y="7" width="28.6" height="19.3" fill="url(#rowFolder)" stroke="#c9a227" />
      </svg>
    );
  }
  return (
    <svg width="30" height="31" viewBox="0 0 30 31">
      <path d="M5 1h16l8 9v20H5z" fill="#fff" stroke="#b4b8bc" />
      <path d="M21 1v9h8" fill="#fff" stroke="#b4b8bc" />
      {kind === 'rdata' && (
        <g>
          <path d="M0 7a9 3.5 0 0 1 18 0v15a9 3.5 0 0 1-18 0z" fill="#0b8f87" />
          <ellipse cx="9" cy="7" rx="9" ry="3.5" fill="#3fc4b6" />
          <text x="9" y="22" textAnchor="middle" fontFamily="Roboto, sans-serif" fontSize="12" fill="#fff">R</text>
        </g>
      )}
      {kind === 'clock' && (
        <g>
          <circle cx="9" cy="15" r="9" fill="#dfe6f4" stroke="#58607a" />
          <path d="M9 8v8h5" fill="none" stroke="#222" strokeWidth="1" />
        </g>
      )}
      {kind === 'gear' && (
        <g>
          <circle cx="9" cy="15" r="6" fill="none" stroke="#5b8db5" strokeWidth="5" />
          <path d="M9 4v22M-1 15h20M2 8l14 14M16 8L2 22" stroke="#5b8db5" strokeWidth="3" />
          <circle cx="9" cy="15" r="3" fill="#fff" />
        </g>
      )}
    </svg>
  );
};

const WindowsLogo = ({ size = 26 }) => (
  <svg width={size} height={size} viewBox="0 0 26 26" fill="currentColor">
    <polygon points="0,4 11,2.4 11,12.4 0,12.4" />
    <polygon points="12.4,2.2 26,0 26,12.4 12.4,12.4" />
    <polygon points="0,13.8 11,13.8 11,23.6 0,22" />
    <polygon points="12.4,13.8 26,13.8 26,26 12.4,23.8" />
  </svg>
);

const ChromeLogo = ({ size = 36 }) => (
  <svg width={size} height={size} viewBox="0 0 36 36">
    <path d="M18 18L3 10a17 17 0 0 1 30 0z" fill="#ea4335" />
    <path d="M18 18L3 10a17 17 0 0 0 10 25z" fill="#34a853" />
    <path d="M18 18l15-8a17 17 0 0 1-20 25z" fill="#fbbc04" />
    <circle cx="18" cy="18" r="8" fill="#fff" />
    <circle cx="18" cy="18" r="6" fill="#4285f4" />
  </svg>
);

const TaskChrome = () => (
  <svg width="40" height="40" viewBox="0 0 40 40">
    <path d="M18 18L3 10a17 17 0 0 1 30 0z" fill="#ea4335" />
    <path d="M18 18L3 10a17 17 0 0 0 10 25z" fill="#34a853" />
    <path d="M18 18l15-8a17 17 0 0 1-20 25z" fill="#fbbc04" />
    <circle cx="18" cy="18" r="8" fill="#fff" />
    <circle cx="18" cy="18" r="6" fill="#4285f4" />
    <circle cx="27" cy="27" r="12" fill="#9c3fb4" />
    <text x="27" y="32" textAnchor="middle" fontFamily="Roboto, sans-serif" fontSize="13" fill="#e8c8ef">M</text>
  </svg>
);

const ExplorerIcon = ({ size = 34 }) => (
  <svg width={size} height={size} viewBox="0 0 34 34">
    <path d="M1 4h12l3 3h17v26H1z" fill="#f5bc3b" />
    <rect x="1" y="10" width="32" height="23" fill="#fbd25e" />
    <path d="M11 33V22h12v11h-4v-6h-4v6z" fill="#3da5e0" />
  </svg>
);

const VSCodeIcon = () => (
  <svg width="36" height="37" viewBox="0 0 36 37">
    <path d="M26 0l10 5v27l-10 5L10 22l-7 5-3-2 8-7-8-7 3-2 7 5z" fill="#1a8dd8" />
    <path d="M26 0l10 5v27l-10 5z" fill="#2ea6f0" />
    <path d="M26 10l-11 8 11 9z" fill="#1b1b1b" />
  </svg>
);

const PyCharmIcon = () => (
  <svg width="30" height="37" viewBox="0 0 30 37">
    <rect width="30" height="37" fill="#f0e732" />
    <rect x="3" y="3" width="24" height="31" fill="#000" />
    <rect x="7" y="26" width="9" height="2" fill="#fff" />
    <text x="14" y="17" textAnchor="middle" fontFamily="Roboto, sans-serif" fontSize="12.5" fontWeight="700" fill="#fff">PC</text>
  </svg>
);

const VBoxIcon = () => (
  <svg width="32" height="37" viewBox="0 0 32 37">
    <path d="M16 1L30 8v18L16 36 2 26V8z" fill="#1a2a44" stroke="#d5e6f2" strokeWidth="1.5" />
    <path d="M4 9l12 6 12-6-12-6z" fill="#2a6cb5" />
    <path d="M16 15v19" stroke="#d5e6f2" strokeWidth="2.5" />
    <path d="M4 9l12 6 12-6" fill="none" stroke="#d5e6f2" strokeWidth="2" />
  </svg>
);

const RLogoTask = () => (
  <svg width="40" height="37" viewBox="0 0 40 37">
    <ellipse cx="18" cy="15" rx="17" ry="13" fill="none" stroke="#a8acb2" strokeWidth="5" />
    <text x="26" y="36" textAnchor="middle" fontFamily="Liberation Sans, sans-serif" fontWeight="700" fontSize="30" fill="#1f5fb4">R</text>
  </svg>
);

const HangUp = () => (
  <svg width="38" height="38" viewBox="0 0 24 24" fill="#d93025">
    <path d="M12 9c-1.6 0-3.15.25-4.6.72v3.1c0 .39-.23.74-.56.9-.98.49-1.87 1.12-2.66 1.85-.18.18-.43.28-.7.28-.28 0-.53-.11-.71-.29L.29 13.08c-.18-.17-.29-.42-.29-.7 0-.28.11-.53.29-.71C3.34 8.78 7.46 7 12 7s8.66 1.78 11.71 4.67c.18.18.29.43.29.71 0 .28-.11.53-.29.71l-2.48 2.48c-.18.18-.43.29-.71.29-.27 0-.52-.11-.7-.28-.79-.74-1.69-1.36-2.67-1.85-.33-.16-.56-.5-.56-.9v-3.1C15.15 9.25 13.6 9 12 9z" />
  </svg>
);

const HelpBadge = () => (
  <svg width="36" height="36" viewBox="0 0 36 36">
    <circle cx="18" cy="18" r="17" fill="#0e93d6" stroke="#fff" strokeWidth="2.4" />
    <text x="18" y="27" textAnchor="middle" fontFamily="Liberation Sans, sans-serif" fontSize="26" fontWeight="700" fill="#fff">?</text>
  </svg>
);

const MeetTray = () => (
  <svg width="18" height="32" viewBox="0 0 18 32" fill="none" stroke="#f0f0f0" strokeWidth="1.4">
    <rect x="1" y="9" width="10" height="14" rx="1" />
    <path d="M11 13l5-3v12l-5-3" />
    <path d="M3 5q4-3 8 0M3 27q4 3 8 0" />
  </svg>
);

const BatteryTray = () => (
  <svg width="24" height="18" viewBox="0 0 24 18">
    <rect x="1" y="1" width="20" height="16" fill="none" stroke="#f0f0f0" strokeWidth="1.6" />
    <rect x="3" y="3" width="10" height="12" fill="#f0f0f0" />
    <rect x="22" y="6" width="2" height="6" fill="#f0f0f0" />
  </svg>
);

const WifiTray = () => (
  <svg width="22" height="22" viewBox="0 0 22 22" fill="none" stroke="#cfcfcf" strokeWidth="1.4">
    <path d="M1.5 20A18.5 18.5 0 0 1 20 1.5" />
    <path d="M6 20A14 14 0 0 1 20 6" />
    <path d="M10.5 20A9.5 9.5 0 0 1 20 10.5" />
    <path d="M15 20A5 5 0 0 1 20 15" />
    <circle cx="19" cy="19.5" r="1.4" fill="#fff" stroke="none" />
  </svg>
);

const NotifyIcon = () => (
  <svg width="25" height="24" viewBox="0 0 25 24">
    <path d="M0 0h25v19h-8l-4 5-4-5H0z" fill="#fff" />
    <path d="M5 5h15M5 9h15M5 13h9" stroke="#333" strokeWidth="1.5" />
  </svg>
);

/* ---------- data ---------- */

const menus = [['File', 60], ['Edit', 63], ['Code', 74], ['View', 71], ['Plots', 71], ['Session', 92], ['Build', 73], ['Debug', 86], ['Profile', 83], ['Tools', 75], ['Help', 40]];

const files = [
  ['rdata', '.RData'],
  ['clock', '.Rhistory'],
  ['folder', 'coursera'],
  ['folder', 'Custom Office Templates'],
  ['doc', 'Database1.accdb'],
  ['doc', 'Default.rdp'],
  ['doc', 'Desktop - Shortcut.lnk'],
  ['gear', 'desktop.ini'],
  ['folder', 'Downloads'],
];

const noteText = `     Max Z=4x1+5x2
         s.t
          x1 + 2x2 <= 10
          6x1 + 6x2 <=36
          x1<=4
  x1,x2>=0
# Import lpSolve package
library(lpSolve)`;

const PaneButtons = () => (
  <PaneControls>
    <MinShape />
    <MaxShape />
  </PaneControls>
);

export default function App() {
  return (
    <Screen>
      <GlobalStyle />
      <MainRow>
        <ChromeColumn>
          <TabStrip>
            <Tab $w={371} $pad={30} $sep>
              <Letter size={23} bg="#b4a7e0" text="N" />
              <TabTitle>Nucleus</TabTitle>
              <X size={16} color="#e0e0e0" strokeWidth={2.4} />
            </Tab>
            <Tab $w={358} $pad={19}>
              <DriveIcon />
              <TabTitle>R Programming - Google Drive</TabTitle>
              <X size={16} color="#e0e0e0" strokeWidth={2.4} />
            </Tab>
            <Tab $w={360} $pad={19} $active>
              <MeetIcon />
              <TabTitle $fade>Meet - Class hour - 18XW47</TabTitle>
              <RecDot />
              <X size={16} color="#fff" strokeWidth={2.4} />
            </Tab>
          </TabStrip>
          <NavBar>
            <NavIcons>
              <NavButton><ArrowLeft size={25} /></NavButton>
              <NavButton><ArrowRight size={25} /></NavButton>
              <NavButton $on><RotateCw size={24} /></NavButton>
            </NavIcons>
            <Address>
              <Lock size={16} color="#f1f3f4" fill="#f1f3f4" />
              <span>https://<AddressStrong>meet.google.com</AddressStrong>/anw-pkev-sge</span>
            </Address>
          </NavBar>
          <Bookmarks>
            <Bookmark $w={102}><AppsIcon /><span>Apps</span></Bookmark>
            <Bookmark $w={191} $gap={14}><SyncIcon /><span>video compresor</span></Bookmark>
            <Bookmark $w={139} $gap={13}><PatIcon /><span>PSG - PAT</span></Bookmark>
            <Bookmark $w={124} $gap={12}><Letter size={24} bg="#b4a7e0" text="N" /><span>Nucleus</span></Bookmark>
            <Bookmark $w={114} $gap={10}><FaGithub size={26} color="#fff" /><span>Github</span></Bookmark>
            <Bookmark $w={124} $gap={12}><MoodleIcon /><span>Moodle</span></Bookmark>
            <Bookmark $w={231} $gap={12}><YoutubeIcon /><span>Kali - Scapy Basics -...</span></Bookmark>
            <Bookmark $w={120} $gap={13}><DiscordIcon /><span>Discord</span></Bookmark>
          </Bookmarks>
          <Presenter>
            <Avatar>D</Avatar>
            <span>Dr Periakaruppan R M - PSGCT is presenting</span>
          </Presenter>
          <Notepad>
            <NotepadTitle>
              <NotepadGlyph />
              <span>*Untitled - Notepad</span>
              <NotepadMinimize />
            </NotepadTitle>
            <NotepadMenu>
              <span>File</span><span>Edit</span><span>Format</span><span>View</span><span>Help</span>
            </NotepadMenu>
            <NotepadText>
              {noteText}
              <Caret />
              <Watermark>
                Activate Windows
                <WatermarkSub>Go to Settings to activate Windows.</WatermarkSub>
              </Watermark>
              <ShareToast>
                <ToastLabel>Your screen is shared</ToastLabel>
                <ToastButton><Pencil size={15} color="#fff" fill="#fff" /></ToastButton>
                <ToastButton><Maximize2 size={15} color="#fff" /></ToastButton>
              </ShareToast>
            </NotepadText>
            <HScroll>
              <ChevronLeft size={10} />
              <HScrollThumb />
            </HScroll>
            <NotepadStatus>
              <StatusCell $w={108}>Ln 7, Col 3</StatusCell>
              <StatusCell $w={38}>100%</StatusCell>
              <StatusCell $w={92}>Windows (CRLF)</StatusCell>
              <StatusCell $w={27}>UTF-8</StatusCell>
            </NotepadStatus>
            <InnerTaskbar>
              <InnerStart><WindowsLogo size={15} /></InnerStart>
              <InnerSearch><Magnifier size={14} color="#555" /><span>Type here to search</span></InnerSearch>
              <InnerSlot><svg width="15" height="15" viewBox="0 0 15 15"><circle cx="7.5" cy="7.5" r="5.5" fill="none" stroke="#fff" strokeWidth="1.8" /></svg></InnerSlot>
              <InnerSlot><svg width="14" height="15" viewBox="0 0 14 15" fill="none" stroke="#ddd"><rect x="1" y="3" width="7" height="9" /><path d="M11 1v4M11 7v4M13 12V3" /></svg></InnerSlot>
              <InnerSlot><svg width="19" height="20" viewBox="0 0 19 20"><rect y="5" width="19" height="15" fill="#fff" /><path d="M6 6V2h7v4" fill="none" stroke="#fff" strokeWidth="1.5" /><rect x="6" y="9" width="3" height="3" fill="#e74" /><rect x="10" y="9" width="3" height="3" fill="#6b3" /><rect x="6" y="13" width="3" height="3" fill="#39d" /><rect x="10" y="13" width="3" height="3" fill="#fb2" /></svg></InnerSlot>
              <InnerSlot><ChromeLogo size={18} /></InnerSlot>
              <InnerSlot><svg width="20" height="16" viewBox="0 0 20 16"><rect y="2" width="20" height="14" fill="#1b9de2" /><path d="M0 2l10 8 10-8z" fill="#fff" /></svg></InnerSlot>
              <InnerSlot><ExplorerIcon size={18} /></InnerSlot>
              <InnerSlot $open><svg width="19" height="20" viewBox="0 0 19 20"><circle cx="9.5" cy="10" r="9" fill="#1f9dc5" /><circle cx="9" cy="11" r="5" fill="#fff" /><circle cx="8" cy="14" r="4" fill="#59c14a" /></svg></InnerSlot>
              <InnerSlot $open><Letter size={19} bg="#2f7fd8" text="R" /></InnerSlot>
              <InnerSlot $active $open><svg width="16" height="20" viewBox="0 0 16 20"><path d="M4 1h11v14l-4 5H1z" fill="#9cd0e6" /><path d="M4 1h11l-4 19" fill="#5f99bd" opacity="0.5" /></svg></InnerSlot>
              <InnerSlot $open><Letter size={20} bg="#9b8bd8" text="N" /></InnerSlot>
              <InnerTray>
                <ChevronUp size={13} />
                <svg width="13" height="15" viewBox="0 0 13 15"><rect width="13" height="15" fill="#e8e8e8" /><path d="M2 4h9M2 7h9M2 10h9" stroke="#444" /></svg>
                <svg width="13" height="9" viewBox="0 0 13 9"><rect width="13" height="9" rx="1" fill="#e8e8e8" /></svg>
                <svg width="12" height="12" viewBox="0 0 22 22" fill="none" stroke="#999" strokeWidth="2"><path d="M1.5 20A18.5 18.5 0 0 1 20 1.5" /><path d="M8 20A12 12 0 0 1 20 8" /><path d="M14 20A6 6 0 0 1 20 14" /></svg>
                <Volume2 size={13} />
                <span>ENG</span>
                <InnerClock>14:09<br />01-04-2021</InnerClock>
              </InnerTray>
            </InnerTaskbar>
          </Notepad>
          <MeetBar>
            <MeetTitle>
              <span>Class hour - 18XW47 - Mathemat...</span>
              <ChevronUp size={28} strokeWidth={2.8} color="#5f6368" />
            </MeetTitle>
            <MeetButtons>
              <RoundButton><MicOff size={34} strokeWidth={2.4} /></RoundButton>
              <RoundButton $light><HangUp /></RoundButton>
              <RoundButton><VideoOff size={34} strokeWidth={2.4} /></RoundButton>
            </MeetButtons>
          </MeetBar>
        </ChromeColumn>

        <RightColumn>
          <WindowStrip>
            <StripPlus><Plus size={22} strokeWidth={2.6} /></StripPlus>
            <StripMenu>▼</StripMenu>
            <StripControl><Minus size={18} /></StripControl>
            <StripControl><Copy size={16} /></StripControl>
            <StripControl><X size={20} strokeWidth={1.4} /></StripControl>
          </WindowStrip>
          <RStudioWindow>
            <TitleBar>
              <Letter size={25} bg="#75aadb" text="R" font="Liberation Serif, serif" fs={15} />
              <span>RStudio</span>
              <WindowButtons>
                <WindowButton><Minus size={18} strokeWidth={1.4} /></WindowButton>
                <WindowButton><Square size={16} strokeWidth={1.4} /></WindowButton>
                <WindowButton><X size={22} strokeWidth={1.2} /></WindowButton>
              </WindowButtons>
            </TitleBar>
            <MenuBar>
              {menus.map(([name, w]) => (
                <MenuItem key={name} $w={w}>{name}</MenuItem>
              ))}
            </MenuBar>
            <Toolbar>
              <NewFileIcon />
              <DropArrow $ml={14} />
              <ToolSep $ml={8} $mr={12} />
              <ProjectIcon />
              <ToolSep $ml={11} $mr={12} />
              <OpenFolder />
              <DropArrow $ml={7} />
              <ToolSep $ml={9} $mr={17} />
              <Floppy />
              <Spacer $w={20} />
              <FloppyAll />
              <ToolSep $ml={14} $mr={16} />
              <PrinterIcon />
              <ToolSep />
              <GotoBox>
                <GoToArrow />
                <span>Go to file/function</span>
              </GotoBox>
              <ToolSep $ml={18} $mr={15} />
              <GridIcon />
              <DropArrow $ml={15} />
            </Toolbar>
            <Workspace>
              <PaneColumn $w={355}>
                <Pane $h={482}>
                  <TabBar>
                    <PaneTab $w={199} $pad={19} $active $red>
                      <RDocIcon />
                      <span>Untitled1*</span>
                      <X size={18} color="#c8c8c8" strokeWidth={3.4} />
                    </PaneTab>
                    <PaneButtons />
                  </TabBar>
                  <PaneBar $pad={19}>
                    <GhostArrows />
                    <ToolSep $ml={15} $mr={15} />
                    <PopoutIcon />
                    <ToolSep $ml={16} $mr={17} />
                    <Floppy />
                    <Spacer $w={16} />
                    <Checkbox />
                    <BarLabel $ml={7}>Source</BarLabel>
                    <ToolSep $ml={18} />
                  </PaneBar>
                  <EditorBody>
                    <Gutter>1</Gutter>
                    <Code>Max Z</Code>
                  </EditorBody>
                  <SourceStatus>
                    <StatusPart $w={112} $center>1:6</StatusPart>
                    <StatusPart $w={150} $pad={10}>
                      <span>(Top Level)</span>
                      <UpDown>
                        <ScrollArrow $s={5} $c="#666" />
                        <ScrollArrow $s={5} $down $c="#666" />
                      </UpDown>
                    </StatusPart>
                    <StatusPart $w={89} $pad={10} $last>R Script</StatusPart>
                  </SourceStatus>
                </Pane>
                <Pane $h={400}>
                  <TabBar>
                    <PaneTab $w={118} $pad={18} $active>Console</PaneTab>
                    <PaneTab $w={170} $pad={18}>
                      <span>Terminal</span>
                      <X size={16} color="#c4c4c4" strokeWidth={3.4} />
                    </PaneTab>
                    <PaneButtons />
                  </TabBar>
                  <PathRow $h={44} $top={5}>
                    <PathLabel>~/</PathLabel>
                    <BackCurve />
                    <Spacer $grow />
                    <BroomIcon />
                    <Spacer $w={15} />
                  </PathRow>
                  <ScrollBody>
                    <MonoLines $lh={31} $pad={12} $mt={-19}>
                      {` an HTML browser i\nnterface to help.\nType 'q()' to quit\n R.\n\n[Workspace loaded\n from ~/.RData]\n\n`}
                      <Prompt>&gt;</Prompt>
                      <PromptCursor />
                    </MonoLines>
                    <VScroll $w={32}>
                      <ScrollArrow $mt={14} />
                      <ScrollThumb $h={34} $mt={188} />
                    </VScroll>
                  </ScrollBody>
                </Pane>
              </PaneColumn>
              <PaneColumn $w={415}>
                <Pane $h={248}>
                  <TabBar>
                    <PaneTab $w={170} $pad={18}>Environment</PaneTab>
                    <PaneTab $w={115} $pad={19} $active>History</PaneTab>
                    <PaneTab $w={70} $pad={19}>Connections</PaneTab>
                    <PaneButtons />
                  </TabBar>
                  <PaneBar $pad={10} $top={5}>
                    <OpenFolder />
                    <Spacer $w={15} />
                    <Floppy />
                    <ToolSep $ml={17} $mr={17} />
                    <ToConsoleIcon />
                    <BarLabel $ml={10}>To Console</BarLabel>
                    <ToolSep $ml={21} $mr={11} />
                    <ToSourceIcon />
                    <BarLabel $ml={7}>To Source</BarLabel>
                  </PaneBar>
                  <ScrollBody>
                    <MonoLines $lh={34.5} $pad={5} $mt={-7}>
                      {`q()\nlibrary(datasets)\ndata(iris)\n?iris\niris`}
                    </MonoLines>
                    <VScroll $w={33}>
                      <ScrollArrow $mt={13} />
                      <ScrollThumb $h={18} $mt={63} />
                      <ScrollArrow $down $mt={27} />
                    </VScroll>
                  </ScrollBody>
                </Pane>
                <Pane $h={700}>
                  <TabBar>
                    <PaneTab $w={82} $pad={17} $active>Files</PaneTab>
                    <PaneTab $w={88} $pad={19}>Plots</PaneTab>
                    <PaneTab $w={135} $pad={19}>Packages</PaneTab>
                    <PaneButtons />
                  </TabBar>
                  <PaneBar $pad={11} $top={6}>
                    <NewFolderIcon />
                    <BarLabel>New Folder</BarLabel>
                    <ToolSep $ml={22} $mr={11} />
                    <DeleteIcon />
                    <BarLabel $ml={11}>Delete</BarLabel>
                    <Spacer $w={24} />
                    <RenameIcon />
                    <BarLabel $ml={9}>Rename</BarLabel>
                  </PaneBar>
                  <PathRow $top={1}>
                    <Spacer $w={7} />
                    <Checkbox />
                    <Spacer $w={15} />
                    <HomeIcon />
                    <HomeLink>Home</HomeLink>
                    <MoreCell>...</MoreCell>
                  </PathRow>
                  <HeaderRow>
                    <HeaderCell $w={58} />
                    <HeaderCell $w={52} />
                    <HeaderCell $grow $pad={10}><SortUp /><span>Name</span></HeaderCell>
                  </HeaderRow>
                  <ScrollBody>
                    <FileList>
                      {files.map(([kind, name]) => (
                        <FileRow key={name}>
                          <Checkbox />
                          <FileIconCell><FileGlyph kind={kind} /></FileIconCell>
                          <FileName>{name}</FileName>
                        </FileRow>
                      ))}
                    </FileList>
                    <VScroll $w={33}>
                      <ScrollArrow $mt={15} $c="#c4c4c4" />
                      <ScrollThumb $h={104} $mt={9} />
                    </VScroll>
                  </ScrollBody>
                </Pane>
              </PaneColumn>
            </Workspace>
          </RStudioWindow>
        </RightColumn>
      </MainRow>
      <Taskbar>
        <StartTile><WindowsLogo /></StartTile>
        <SearchBox>
          <Magnifier size={27} color="#e8e8e8" />
          <span>Type here to search</span>
        </SearchBox>
        <TaskSlot><svg width="26" height="26" viewBox="0 0 26 26"><circle cx="13" cy="13" r="10" fill="none" stroke="#fff" strokeWidth="3.4" /></svg></TaskSlot>
        <TaskSlot $open><TaskChrome /></TaskSlot>
        <TaskSlot><ExplorerIcon /></TaskSlot>
        <TaskSlot><VSCodeIcon /></TaskSlot>
        <TaskSlot><PyCharmIcon /></TaskSlot>
        <TaskSlot><VBoxIcon /></TaskSlot>
        <TaskSlot $open><RLogoTask /></TaskSlot>
        <TaskSlot $active $open><Letter size={36} bg="#75aadb" text="R" font="Liberation Serif, serif" fs={14} /></TaskSlot>
        <Tray>
          <TrayIcon $mr={5}><HelpBadge /></TrayIcon>
          <TrayIcon><ChevronUp size={24} strokeWidth={1.5} /></TrayIcon>
          <TrayIcon><MeetTray /></TrayIcon>
          <TrayIcon><BatteryTray /></TrayIcon>
          <TrayIcon><Volume2 size={26} strokeWidth={1.5} /></TrayIcon>
          <TrayIcon><WifiTray /></TrayIcon>
          <TrayText>ENG</TrayText>
          <Clock>14:09<br />01-04-2021</Clock>
          <Notify><NotifyIcon /></Notify>
        </Tray>
      </Taskbar>
    </Screen>
  );
}
